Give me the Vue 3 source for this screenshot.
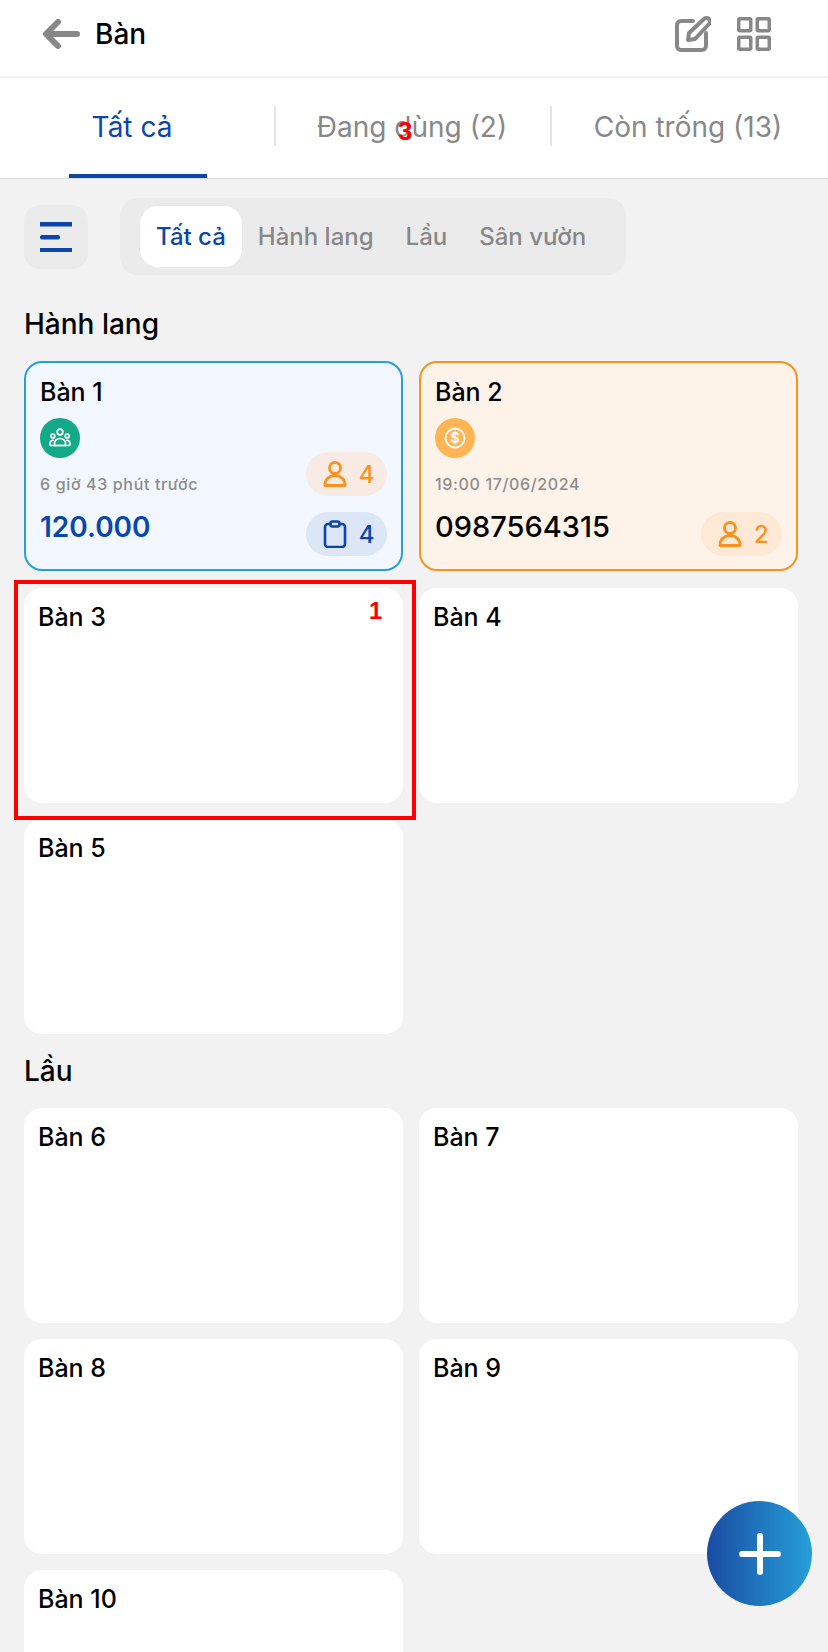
<template>
  <div class="screen">
    <header class="topbar">
      <svg class="back" viewBox="0 0 38 32" fill="none" stroke="#888" stroke-width="6" stroke-linecap="round" stroke-linejoin="round">
        <path d="M35 16H5" />
        <path d="M16 4 4 16l12 12" />
      </svg>
      <h1 class="title">Bàn</h1>
      <div class="actions">
        <svg class="icon-edit" viewBox="0 0 36 36" fill="none" stroke="#888" stroke-width="4" stroke-linecap="round" stroke-linejoin="round">
          <path d="M18 5H6a4 4 0 0 0-4 4v21a4 4 0 0 0 4 4h21a4 4 0 0 0 4-4V17" />
          <path d="M13 24l1-7L29 3a3.500 3.500 0 0 1 5 5L20 23z" />
        </svg>
        <svg class="icon-grid" viewBox="0 0 34 34" fill="none" stroke="#888" stroke-width="3.500">
          <rect x="1.750" y="1.750" width="12" height="12" rx="1" />
          <rect x="20.250" y="1.750" width="12" height="12" rx="1" />
          <rect x="1.750" y="20.250" width="12" height="12" rx="1" />
          <rect x="20.250" y="20.250" width="12" height="12" rx="1" />
        </svg>
      </div>
    </header>

    <nav class="tabs">
      <div v-for="(tab, i) in tabs" :key="tab" class="tab" :class="{ active: i === 0 }">
        <span>{{ tab }}</span>
      </div>
    </nav>

    <main class="content">
      <div class="filters">
        <button class="menu-btn">
          <svg viewBox="0 0 32 30" width="32" height="30" fill="#0b46ab">
            <rect x="0" y="0" width="32" height="4.500" />
            <rect x="0" y="13" width="20" height="4.500" rx="2" />
            <rect x="0" y="26" width="32" height="4.500" />
          </svg>
        </button>
        <div class="segments">
          <span v-for="(area, i) in areas" :key="area" class="segment" :class="{ active: i === 0 }">{{ area }}</span>
        </div>
      </div>

      <section v-for="group in groups" :key="group.name" class="group">
        <h2 class="group-name">{{ group.name }}</h2>
        <div class="table-grid">
          <div v-for="table in group.tables" :key="table.name" class="table" :class="table.state">
            <div class="table-name">{{ table.name }}</div>

            <template v-if="table.state === 'busy'">
              <span class="status green">
                <svg viewBox="0 0 24 24" width="24" height="24" fill="none" stroke="#fff" stroke-width="1.700">
                  <circle cx="12" cy="6" r="2.800" />
                  <circle cx="4.800" cy="10" r="2" />
                  <circle cx="19.200" cy="10" r="2" />
                  <path d="M6.500 19.500v-2.500a5.500 4.500 0 0 1 11 0v2.500z" />
                  <path d="M2 19.500v-2.500a3 3 0 0 1 4-2.500M22 19.500v-2.500a3 3 0 0 0-4-2.500M2 19.500h20" />
                </svg>
              </span>
              <div class="table-time">6 giờ 43 phút trước</div>
              <div class="table-amount blue">120.000</div>
              <div class="chips">
                <span class="chip guest">
                  <svg viewBox="0 0 24 28" width="24" height="28" fill="none" stroke="currentColor" stroke-width="2.800">
                    <circle cx="12" cy="8" r="5.500" />
                    <path d="M2 25.500v-1a10 9 0 0 1 20 0v1z" stroke-linejoin="round" />
                  </svg>
                  4
                </span>
                <span class="chip order">
                  <svg viewBox="0 0 24 28" width="24" height="28" fill="none" stroke="currentColor" stroke-width="2.600" stroke-linejoin="round">
                    <rect x="2" y="4" width="20" height="23" rx="3" />
                    <rect x="7.500" y="1.500" width="9" height="5" rx="2" fill="#dce6f6" />
                  </svg>
                  4
                </span>
              </div>
            </template>

            <template v-else-if="table.state === 'booked'">
              <span class="status amber">
                <svg viewBox="0 0 24 24" width="24" height="24" fill="none" stroke="#fff" stroke-width="1.800">
                  <circle cx="12" cy="12" r="9.500" />
                  <text x="12" y="16.500" text-anchor="middle" class="dollar">$</text>
                </svg>
              </span>
              <div class="table-time">19:00 17/06/2024</div>
              <div class="table-amount phone">0987564315</div>
              <div class="chips">
                <span class="chip guest soft">
                  <svg viewBox="0 0 24 28" width="24" height="28" fill="none" stroke="currentColor" stroke-width="2.800">
                    <circle cx="12" cy="8" r="5.500" />
                    <path d="M2 25.500v-1a10 9 0 0 1 20 0v1z" stroke-linejoin="round" />
                  </svg>
                  2
                </span>
              </div>
            </template>
          </div>
        </div>
      </section>
    </main>

    <button class="fab">
      <svg viewBox="0 0 42 42" width="42" height="42" stroke="#fff" stroke-width="6" stroke-linecap="round">
        <path d="M21 3v36M3 21h36" />
      </svg>
    </button>

    <!-- review marks drawn over the screen -->
    <div class="mark-box"></div>
    <span class="mark mark-one">1</span>
    <span class="mark mark-three">3</span>
  </div>
</template>

<script setup>
const tabs = ['Tất cả', 'Đang dùng (2)', 'Còn trống (13)'];
const areas = ['Tất cả', 'Hành lang', 'Lầu', 'Sân vườn'];

const makeTables = (from, to) => {
  const list = [];
  for (let n = from; n <= to; n++) list.push({ name: 'Bàn ' + n, state: 'free' });
  return list;
};

const groups = [
  {
    name: 'Hành lang',
    tables: [
      { name: 'Bàn 1', state: 'busy' },
      { name: 'Bàn 2', state: 'booked' },
      ...makeTables(3, 5)
    ]
  },
  { name: 'Lầu', tables: makeTables(6, 10) }
];
</script>

<style>
html, body {
  margin: 0;
  background: #f2f2f2;
}
</style>

<style scoped>
.screen {
  position: relative;
  width: 828px;
  height: 1652px;
  overflow: hidden;
  background: #f2f2f2;
  font-family: Inter, "Noto Sans", sans-serif;
  color: #000;
}

.topbar {
  height: 76px;
  display: flex;
  align-items: center;
  padding: 0 57px 0 42px;
  background: #fff;
  border-bottom: 2px solid #f2f2f2;
}

.back {
  width: 38px;
  height: 32px;
  margin-top: -9px;
}

.title {
  margin: -9px 0 0 15px;
  font-size: 28px;
  font-weight: 500;
}

.actions {
  margin-left: auto;
  display: flex;
  align-items: center;
  gap: 26px;
  margin-top: -8px;
}

.icon-edit {
  width: 36px;
  height: 36px;
}

.icon-grid {
  width: 34px;
  height: 34px;
}

.tabs {
  height: 101px;
  box-sizing: border-box;
  display: flex;
  background: #fff;
  border-bottom: 1px solid #dcdcdc;
}

.tab {
  flex: 0 0 276px;
  box-sizing: border-box;
  position: relative;
  display: flex;
  align-items: center;
  justify-content: center;
  padding: 0 4px 3px 0;
  font-size: 28px;
  white-space: nowrap;
  color: #888;
}

.tab + .tab::before {
  content: "";
  position: absolute;
  left: -2px;
  top: 28px;
  width: 2px;
  height: 40px;
  background: #e4e4e4;
}

.tab.active {
  padding-right: 12px;
  color: #0b46ab;
}

.tab.active::after {
  content: "";
  position: absolute;
  left: 69px;
  bottom: 0;
  width: 138px;
  height: 4px;
  background: #0b46ab;
}

.content {
  padding: 19px 30px 0 24px;
}

.filters {
  display: flex;
  align-items: center;
  gap: 32px;
}

.menu-btn {
  width: 64px;
  height: 64px;
  padding: 0;
  border: 0;
  border-radius: 16px;
  background: #ebebeb;
  display: flex;
  align-items: center;
  justify-content: center;
}

.segments {
  width: 506px;
  height: 77px;
  box-sizing: border-box;
  padding: 8px 20px;
  display: flex;
  background: #ebebeb;
  border-radius: 18px;
}

.segment {
  display: flex;
  align-items: center;
  padding: 0 16px;
  font-size: 24px;
  font-weight: 500;
  white-space: nowrap;
  color: #888;
}

.segment.active {
  background: #fff;
  border-radius: 18px;
  color: #0b46ab;
}

.group-name {
  margin: 0;
  font-size: 28px;
  line-height: 34px;
  font-weight: 500;
}

.filters + .group {
  margin-top: 32px;
}

.group + .group {
  margin-top: 20px;
}

.table-grid {
  margin-top: 20px;
  display: grid;
  grid-template-columns: 379px 379px;
  column-gap: 16px;
  row-gap: 16px;
}

.table {
  position: relative;
  height: 215px;
  box-sizing: border-box;
  padding: 14px;
  background: #fff;
  border-radius: 18px;
}

.table-name {
  font-size: 25px;
  line-height: 30px;
  font-weight: 500;
}

.table.busy,
.table.booked {
  height: 210px;
  margin-bottom: 1px;
  padding: 14px 14px;
  border: 2px solid;
}

.table.busy {
  background: #f3f7ff;
  border-color: #25a0d8;
}

.table.booked {
  background: #fef3e9;
  border-color: #f7931e;
}

.status {
  margin-top: 11px;
  width: 40px;
  height: 40px;
  border-radius: 50%;
  display: flex;
  align-items: center;
  justify-content: center;
}

.status.green {
  background: #12a888;
}

.status.amber {
  background: #ffb554;
}

.dollar {
  font-size: 14px;
  font-weight: 700;
  fill: #fff;
  stroke: none;
}

.table-time {
  margin-top: 16px;
  font-size: 16px;
  line-height: 20px;
  font-weight: 500;
  letter-spacing: 0.65px;
  color: #8c8c8c;
}

.table-amount {
  margin-top: 15px;
  font-size: 28px;
  line-height: 36px;
  font-weight: 600;
}

.table-amount.blue {
  color: #0b46ab;
}

.table-amount.phone {
  font-size: 29px;
  font-weight: 500;
}

.chips {
  position: absolute;
  right: 14px;
  bottom: 13px;
  display: flex;
  flex-direction: column;
  gap: 16px;
}

.chip {
  width: 81px;
  height: 44px;
  box-sizing: border-box;
  border-radius: 22px;
  display: flex;
  align-items: center;
  justify-content: center;
  gap: 12px;
  padding-left: 4px;
  font-size: 24px;
  font-weight: 500;
}

.chip.guest {
  background: #f7ebe3;
  color: #f7931e;
}

.chip.guest.soft {
  background: #fde9d6;
}

.chip.order {
  background: #dce6f6;
  color: #0b46ab;
}

.fab {
  position: absolute;
  left: 707px;
  top: 1501px;
  width: 105px;
  height: 105px;
  padding: 0;
  border: 0;
  border-radius: 50%;
  background: linear-gradient(90deg, #1a4ba3, #25a0d8);
  display: flex;
  align-items: center;
  justify-content: center;
}

.mark-box {
  position: absolute;
  left: 14px;
  top: 580px;
  width: 402px;
  height: 240px;
  box-sizing: border-box;
  border: 4px solid #f00;
}

.mark {
  position: absolute;
  font-family: "Liberation Sans", sans-serif;
  font-weight: 700;
  font-size: 24px;
  line-height: 28px;
  color: #f00;
}

.mark-one {
  left: 369px;
  top: 597px;
}

.mark-three {
  left: 398px;
  top: 117px;
  font-size: 26px;
}
</style>
